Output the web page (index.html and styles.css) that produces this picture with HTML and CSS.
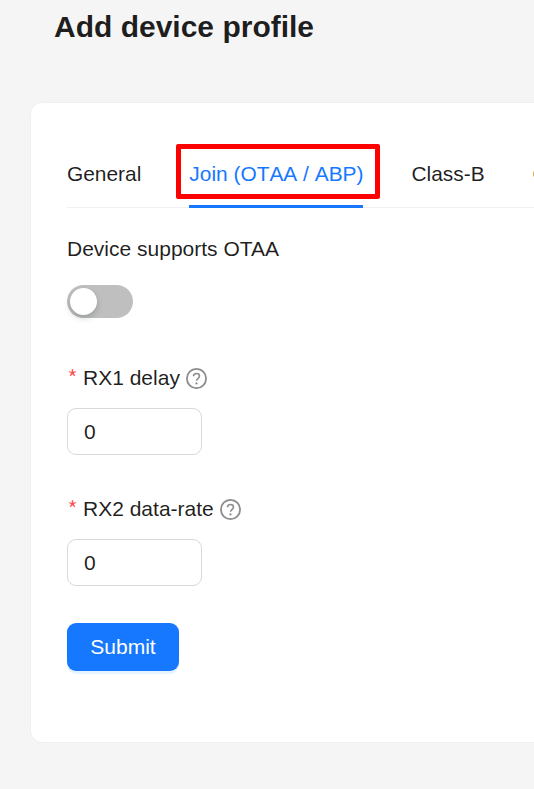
FILE: index.html
```html
<!DOCTYPE html>
<html lang="en">
<head>
<meta charset="utf-8">
<title>Add device profile</title>
<link rel="stylesheet" href="styles.css">
</head>
<body>
<div class="page">
  <h1 class="title">Add device profile</h1>
  <form class="card">
    <div class="tabs">
      <div class="tab">General</div>
      <div class="tab tab-active">Join (OTAA / ABP)<span class="highlight"></span></div>
      <div class="tab">Class-B</div>
      <div class="tab">Class-C</div>
    </div>
    <div class="field field-switch">
      <label class="label">Device supports OTAA</label>
      <button type="button" class="switch"><span class="knob"></span></button>
    </div>
    <div class="field">
      <label class="label label-input"><span class="req">*</span>RX1 delay
        <svg class="help" viewBox="0 0 21 21" width="21" height="21"><circle cx="10.5" cy="10.5" r="9.6" fill="none" stroke="#8c8c8c" stroke-width="1.8"/><path d="M7.5 8.3c0-1.7 1.3-2.8 3-2.8s3 1.1 3 2.6c0 2.4-3 2.4-3 4.6" fill="none" stroke="#8c8c8c" stroke-width="1.6"/><circle cx="10.5" cy="15.4" r="1.1" fill="#8c8c8c"/></svg>
      </label>
      <input class="input" value="0">
    </div>
    <div class="field field-last">
      <label class="label label-input"><span class="req">*</span>RX2 data-rate
        <svg class="help" viewBox="0 0 21 21" width="21" height="21"><circle cx="10.5" cy="10.5" r="9.6" fill="none" stroke="#8c8c8c" stroke-width="1.8"/><path d="M7.5 8.3c0-1.7 1.3-2.8 3-2.8s3 1.1 3 2.6c0 2.4-3 2.4-3 4.6" fill="none" stroke="#8c8c8c" stroke-width="1.6"/><circle cx="10.5" cy="15.4" r="1.1" fill="#8c8c8c"/></svg>
      </label>
      <input class="input" value="0">
    </div>
    <button type="button" class="submit">Submit</button>
  </form>
</div>
</body>
</html>
```
FILE: styles.css
```css
html, body {
  margin: 0;
  height: 100%;
  overflow: hidden;
  background: #f5f5f5;
}
body {
  font-family: "Liberation Sans", Arial, sans-serif;
  font-size: 21px;
  color: rgba(0, 0, 0, 0.88);
}
.page {
  width: 1000px;
  padding-left: 30px;
  box-sizing: border-box;
}
.title {
  margin: 0;
  padding: 9px 0 0 24px;
  height: 102px;
  box-sizing: border-box;
  font-size: 30px;
  line-height: 36px;
  font-weight: 700;
}
.card {
  box-sizing: border-box;
  height: 641px;
  background: #fff;
  border: 1px solid #f0f0f0;
  border-radius: 12px;
  padding: 35px 36px 0;
}
.tabs {
  display: flex;
  gap: 48px;
  border-bottom: 1.5px solid #f0f0f0;
  height: 70px;
  box-sizing: border-box;
  font-size: 20.9px;
  font-kerning: none;
}
.tab {
  position: relative;
  line-height: 24px;
  padding-top: 24px;
  height: 70px;
  box-sizing: border-box;
}
.tab-active {
  color: #1677ff;
  border-bottom: 3px solid #1677ff;
}
.highlight {
  position: absolute;
  left: -13px;
  right: -17px;
  top: 6px;
  height: 45px;
  border: 5px solid #f00;
  border-radius: 2px;
}
.field {
  margin-bottom: 42px;
}
.field-switch {
  padding-top: 29px;
  margin-bottom: 48px;
}
.field-last {
  margin-bottom: 37px;
}
.label {
  display: flex;
  align-items: center;
  height: 24px;
  line-height: 24px;
  margin-bottom: 24px;
  gap: 6px;
}
.label-input {
  margin-bottom: 18px;
}
.req {
  color: #ff4d4f;
  font-family: "Noto Sans CJK SC", sans-serif;
  font-size: 25px;
  font-weight: 300;
  width: 10px;
}
.help {
  display: block;
}
.switch {
  display: block;
  position: relative;
  width: 66px;
  height: 33px;
  padding: 0;
  border: 0;
  border-radius: 17px;
  background: #bfbfbf;
}
.knob {
  position: absolute;
  left: 3px;
  top: 3px;
  width: 27px;
  height: 27px;
  border-radius: 50%;
  background: #fff;
  box-shadow: 0 3px 6px rgba(0, 35, 11, 0.2);
}
.input {
  display: block;
  box-sizing: border-box;
  width: 135px;
  height: 47px;
  padding: 0 16px;
  border: 1px solid #d9d9d9;
  border-radius: 9px;
  font: 21px "Liberation Sans", Arial, sans-serif;
  color: rgba(0, 0, 0, 0.88);
  background: #fff;
}
.submit {
  display: block;
  width: 112px;
  height: 48px;
  border: 0;
  border-radius: 9px;
  background: #1677ff;
  color: #fff;
  font: 21px "Liberation Sans", Arial, sans-serif;
  box-shadow: 0 3px 0 rgba(5, 145, 255, 0.1);
}
```
